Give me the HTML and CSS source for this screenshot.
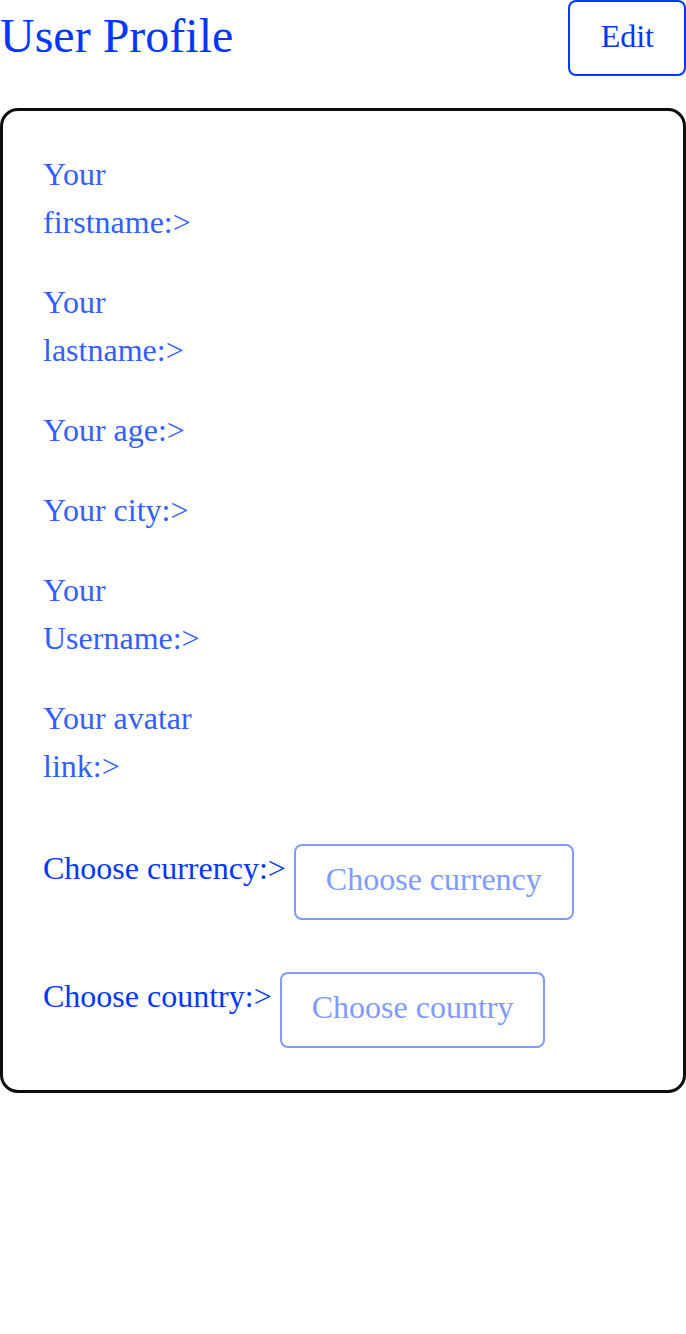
FILE: index.html
```html
<!DOCTYPE html>
<html lang="en">
<head>
<meta charset="utf-8">
<title>User Profile</title>
<link rel="stylesheet" href="styles.css">
</head>
<body>
<header class="header">
  <h1 class="title">User Profile</h1>
  <button class="edit-btn" type="button">Edit</button>
</header>
<main class="card">
  <div class="field"><span class="label">Your firstname:&gt;</span></div>
  <div class="field"><span class="label">Your lastname:&gt;</span></div>
  <div class="field"><span class="label">Your age:&gt;</span></div>
  <div class="field"><span class="label">Your city:&gt;</span></div>
  <div class="field"><span class="label">Your Username:&gt;</span></div>
  <div class="field"><span class="label">Your avatar link:&gt;</span></div>
  <div class="choose-row">
    <span class="choose-label">Choose currency:&gt;</span>
    <button class="choose-btn" type="button">Choose currency</button>
  </div>
  <div class="choose-row choose-row-last">
    <span class="choose-label">Choose country:&gt;</span>
    <button class="choose-btn" type="button">Choose country</button>
  </div>
</main>
</body>
</html>
```
FILE: styles.css
```css
html, body {
  margin: 0;
  padding: 0;
  background: #ffffff;
}
body {
  font-family: "Liberation Serif", "Times New Roman", serif;
  font-size: 32px;
  line-height: 1.5;
  color: #0037ff;
  width: 686px;
}
.header {
  display: flex;
  justify-content: space-between;
  align-items: flex-start;
}
.title {
  margin: 0;
  font-size: 48px;
  font-weight: normal;
  line-height: 72px;
  color: #0037ff;
}
.edit-btn {
  font-family: inherit;
  font-size: 32px;
  line-height: 48px;
  color: #0037ff;
  background: #ffffff;
  border: 2px solid #0037ff;
  border-radius: 8px;
  padding: 10px 30px 14px 31px;
  margin: 0;
}
.card {
  margin-top: 32px;
  border: 3px solid #0d0d0d;
  border-radius: 18px;
  padding: 39px 40px 42px 40px;
  display: flex;
  flex-direction: column;
  gap: 32px;
}
.field {
  display: flex;
}
.label {
  width: 156px;
  color: #335fff;
}
.choose-row {
  display: flex;
  align-items: flex-start;
  gap: 8px;
  padding-top: 22px;
}
.choose-row-last {
  padding-top: 20px;
}
.choose-label {
  color: #0037ff;
  white-space: nowrap;
}
.choose-btn {
  font-family: inherit;
  font-size: 32px;
  line-height: 48px;
  color: #809bff;
  background: #ffffff;
  border: 2px solid #809bff;
  border-radius: 8px;
  padding: 9px 30px 15px 30px;
  margin: 0;
}
```
